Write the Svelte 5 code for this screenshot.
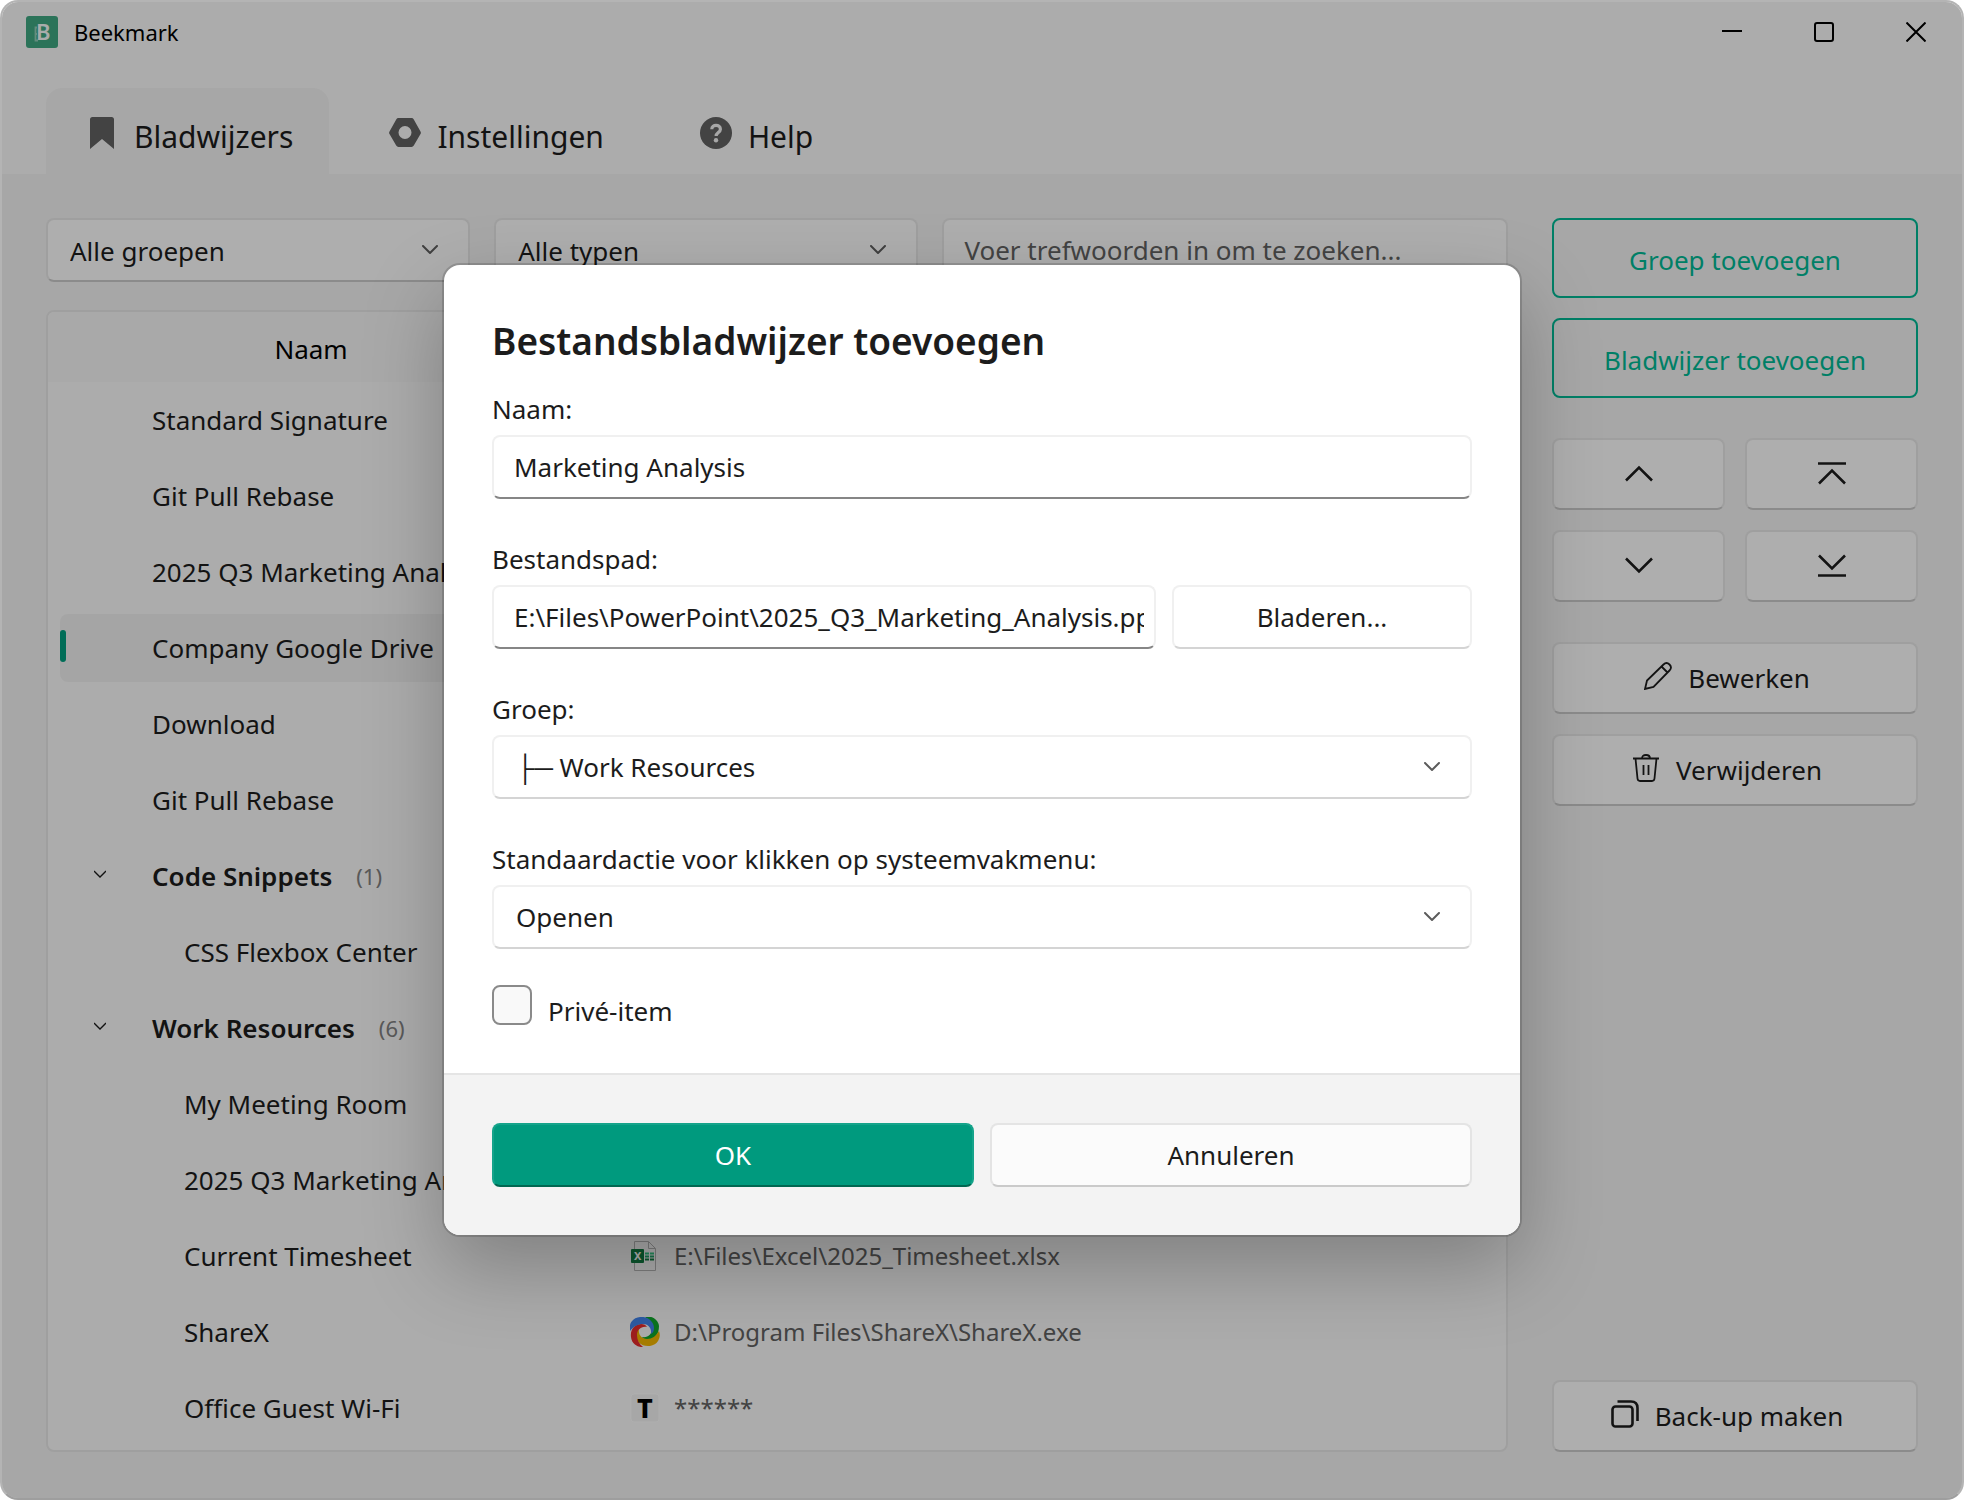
<script>
  const bookmarks = [
    { name: 'Standard Signature', level: 1 },
    { name: 'Git Pull Rebase', level: 1 },
    { name: '2025 Q3 Marketing Analysis', level: 1 },
    { name: 'Company Google Drive', level: 1, selected: true },
    { name: 'Download', level: 1 },
    { name: 'Git Pull Rebase', level: 1 },
    { name: 'Code Snippets', group: true, count: 1 },
    { name: 'CSS Flexbox Center', level: 2 },
    { name: 'Work Resources', group: true, count: 6 },
    { name: 'My Meeting Room', level: 2 },
    { name: '2025 Q3 Marketing Analysis', level: 2 },
    { name: 'Current Timesheet', level: 2, icon: 'excel', value: 'E:\\Files\\Excel\\2025_Timesheet.xlsx' },
    { name: 'ShareX', level: 2, icon: 'sharex', value: 'D:\\Program Files\\ShareX\\ShareX.exe' },
    { name: 'Office Guest Wi-Fi', level: 2, icon: 'text', value: '******' }
  ];

  let name = $state('Marketing Analysis');
  let path = $state('E:\\Files\\PowerPoint\\2025_Q3_Marketing_Analysis.pptx');
  let isPrivate = $state(false);
</script>

{#snippet chevron()}
  <svg class="chevron" width="16" height="10" viewBox="0 0 16 10" aria-hidden="true">
    <path d="M1 1l7 7 7-7" fill="none" stroke="#5c5c5c" stroke-width="2" stroke-linecap="round" stroke-linejoin="round" />
  </svg>
{/snippet}

<div class="window">
  <header>
    <div class="titlebar">
      <svg class="logo" width="32" height="32" viewBox="0 0 32 32" aria-hidden="true">
        <rect width="32" height="32" rx="3" fill="#3ea580" />
        <path d="M11 11.500H9.500v13H12M9.500 18H11" fill="none" stroke="#8fcab5" stroke-width="1.800" />
        <text x="10" y="24" font-size="22" font-weight="600" fill="#f2f7f5">B</text>
      </svg>
      <span class="app-name">Beekmark</span>
      <div class="controls">
        <button aria-label="Minimaliseren">
          <svg width="20" height="20" viewBox="0 0 20 20"><path d="M0 9h20" stroke="#000" stroke-width="2" /></svg>
        </button>
        <button aria-label="Maximaliseren">
          <svg width="20" height="20" viewBox="0 0 20 20"><rect x="1" y="1" width="18" height="18" rx="2" fill="none" stroke="#000" stroke-width="2" /></svg>
        </button>
        <button aria-label="Sluiten">
          <svg width="20" height="20" viewBox="0 0 20 20"><path d="M.5.5l19 19M19.5.5l-19 19" stroke="#000" stroke-width="2" /></svg>
        </button>
      </div>
    </div>

    <nav>
      <button class="tab active">
        <svg width="32" height="32" viewBox="0 0 32 32"><path d="M4 2.500q0-2.500 2.500-2.500h19q2.500 0 2.500 2.500V32L16 22 4 32z" /></svg>
        Bladwijzers
      </button>
      <button class="tab">
        <svg width="32" height="32" viewBox="0 0 32 32"><path fill-rule="evenodd" d="M9.500 1h13q1.500 0 2.300 1.400l6.700 12q.8 1.300 0 2.600l-6.700 11.600q-.8 1.400-2.300 1.400h-13q-1.500 0-2.300-1.400L.5 17q-.8-1.300 0-2.600l6.700-12Q8 1 9.500 1zM16 9a6.500 6.500 0 1 0 0 13 6.500 6.500 0 0 0 0-13z" /></svg>
        Instellingen
      </button>
      <button class="tab">
        <svg width="32" height="32" viewBox="0 0 32 32"><circle cx="16" cy="16" r="16" /><path d="M11.800 12.200c0-5 8.600-5 8.600 0 0 3.200-4.300 3.400-4.300 6.800" fill="none" stroke="#f0f0f0" stroke-width="3.200" /><circle cx="16" cy="23.300" r="2.200" fill="#f0f0f0" /></svg>
        Help
      </button>
    </nav>
  </header>

  <div class="content">
    <main>
      <div class="filters">
        <div class="select">
          <select aria-label="Groepen"><option>Alle groepen</option></select>
          {@render chevron()}
        </div>
        <div class="select">
          <select aria-label="Typen"><option>Alle typen</option></select>
          {@render chevron()}
        </div>
        <input class="search" type="text" aria-label="Zoeken" placeholder="Voer trefwoorden in om te zoeken..." />
      </div>

      <div class="list">
        <table>
          <thead>
            <tr><th class="name-col">Naam</th><th aria-label="Inhoud"></th></tr>
          </thead>
          <tbody>
            {#each bookmarks as item}
              <tr class:selected={item.selected}>
                <td>
                  <div class="cell name-cell" class:nested={item.level === 2} class:group={item.group}>
                    {#if item.group}
                      <svg class="toggle" width="12" height="8" viewBox="0 0 12 8"><path d="M0 1l6 6 6-6" fill="none" stroke="#1c1c1c" stroke-width="1.300" /></svg>
                    {/if}
                    <span>{item.name}</span>
                    {#if item.count}<span class="count">({item.count})</span>{/if}
                  </div>
                </td>
                <td>
                  <div class="cell value-cell">
                    {#if item.icon === 'excel'}
                      <svg width="30" height="30" viewBox="0 0 30 30">
                        <path d="M4.500.5h14l7 7v22h-21z" fill="none" stroke="#b4b4b4" />
                        <path d="M18.500.5v7h7" fill="none" stroke="#b4b4b4" />
                        <rect x="1" y="8" width="13" height="14" rx="1" fill="#107c41" />
                        <text x="4" y="19" font-size="11" font-weight="700" fill="#fff">X</text>
                        <path d="M15 12.500h4M20 12.500h4" stroke="#33c481" stroke-width="2" />
                        <path d="M15 15.500h4M20 15.500h4" stroke="#21a366" stroke-width="2" />
                        <path d="M15 18.500h4M20 18.500h4" stroke="#107c41" stroke-width="2" />
                      </svg>
                    {:else if item.icon === 'sharex'}
                      <svg width="30" height="30" viewBox="0 0 30 30">
                        <path d="M15 0a11 11 0 0 1 14 9c0 9-5 14-11 14-3 0-5-1-6-3 6 1 10-3 10-8 0-5-3-9-7-12z" fill="#10a52c" />
                        <path d="M29 14a11 11 0 0 1-9 15c-9 1-14-5-14-11 0-3 1-5 3-6-1 6 3 10 8 10 5 0 9-3 12-8z" fill="#f0b400" />
                        <path d="M13 30A11 11 0 0 1 1 20C0 12 5 7 11 7c3 0 5 1 6 3-6-1-10 3-10 8 0 5 2 9 6 12z" fill="#e32b2b" />
                        <path d="M0 14A11 11 0 0 1 10 0c8-1 14 5 14 11 0 3-1 5-3 6 1-6-3-10-8-10-5 0-9 2-13 7z" fill="#3f82e8" />
                      </svg>
                    {:else if item.icon === 'text'}
                      <svg width="30" height="30" viewBox="0 0 30 30">
                        <rect x="1" y="1" width="28" height="28" rx="3" fill="#efefef" stroke="#fafafa" />
                        <text x="15" y="25" font-size="27" font-weight="800" text-anchor="middle" fill="#000">T</text>
                      </svg>
                    {/if}
                    <span>{item.value ?? ''}</span>
                  </div>
                </td>
              </tr>
            {/each}
          </tbody>
        </table>
      </div>
    </main>

    <aside>
      <button class="outline">Groep toevoegen</button>
      <button class="outline">Bladwijzer toevoegen</button>
      <div class="arrows">
        <button class="btn" aria-label="Omhoog">
          <svg width="28" height="28" viewBox="0 0 28 28"><path d="M1 20.500l13-13 13 13" /></svg>
        </button>
        <button class="btn" aria-label="Naar boven">
          <svg width="28" height="28" viewBox="0 0 28 28"><path d="M0 3.500h28M1 23.500l13-13 13 13" /></svg>
        </button>
        <button class="btn" aria-label="Omlaag">
          <svg width="28" height="28" viewBox="0 0 28 28"><path d="M1 6.500l13 13 13-13" /></svg>
        </button>
        <button class="btn" aria-label="Naar beneden">
          <svg width="28" height="28" viewBox="0 0 28 28"><path d="M0 23.500h28M1 3.500l13 13 13-13" /></svg>
        </button>
      </div>
      <button class="btn with-icon">
        <svg class="thin" width="28" height="28" viewBox="0 0 28 28"><path d="M1 27l2-8.500L19.500 2.500q3-3 6 0t0 6L9.500 25zM17.500 4.500l6 6" /></svg>
        Bewerken
      </button>
      <button class="btn with-icon">
        <svg class="thin" width="28" height="28" viewBox="0 0 28 28"><path d="M1 4.500h26M10 4.500q0-3.500 4-3.500t4 3.500M3.500 4.500l2 20q.3 2.500 2.500 2.500h12q2.200 0 2.500-2.500l2-20M11.500 11v10M16.500 11v10" /></svg>
        Verwijderen
      </button>
      <button class="btn with-icon backup">
        <svg width="28" height="28" viewBox="0 0 28 28"><rect x="1.500" y="6.500" width="20" height="20" rx="3" /><path d="M6.500 1.500H20q6.500 0 6.500 6.500v13" /></svg>
        Back-up maken
      </button>
    </aside>
  </div>

  <div class="scrim">
    <div class="dialog" role="dialog" aria-labelledby="dialog-title">
      <div class="body">
        <h1 id="dialog-title">Bestandsbladwijzer toevoegen</h1>

        <div class="field">
          <label for="name">Naam:</label>
          <input id="name" type="text" bind:value={name} />
        </div>

        <div class="field">
          <label for="path">Bestandspad:</label>
          <div class="path-row">
            <input id="path" type="text" bind:value={path} />
            <button class="btn">Bladeren...</button>
          </div>
        </div>

        <div class="field">
          <label for="group">Groep:</label>
          <div class="select">
            <select id="group"><option>├─ Work Resources</option></select>
            {@render chevron()}
          </div>
        </div>

        <div class="field">
          <label for="action">Standaardactie voor klikken op systeemvakmenu:</label>
          <div class="select">
            <select id="action"><option>Openen</option></select>
            {@render chevron()}
          </div>
        </div>

        <label class="check">
          <input type="checkbox" bind:checked={isPrivate} />
          <span>Privé-item</span>
        </label>
      </div>

      <footer>
        <button class="btn primary">OK</button>
        <button class="btn cancel">Annuleren</button>
      </footer>
    </div>
  </div>
</div>

<style>
  :global(body) {
    margin: 0;
    background: #fff;
  }

  .window {
    position: relative;
    display: flex;
    flex-direction: column;
    box-sizing: border-box;
    min-height: 100vh;
    border: 2px solid #b4b4b4;
    border-bottom-color: #9e9e9e;
    border-radius: 18px;
    overflow: hidden;
    background: #f0f0f0;
    color: #1c1c1c;
    font-family: 'Noto Sans', 'Open Sans', sans-serif;
    font-size: 26px;
    line-height: 36px;
  }

  .window * {
    box-sizing: border-box;
  }

  button,
  input,
  select {
    font: inherit;
    color: inherit;
    margin: 0;
  }

  header {
    background: #f7f7f7;
  }

  .titlebar {
    display: flex;
    align-items: center;
    height: 60px;
    padding-left: 24px;
  }

  .app-name {
    margin-left: 16px;
    font-size: 22px;
    color: #000;
  }

  .controls {
    display: flex;
    margin-left: auto;
  }

  .controls button {
    display: flex;
    align-items: center;
    justify-content: center;
    width: 92px;
    height: 60px;
    padding: 0;
    border: none;
    background: none;
  }

  nav {
    display: flex;
    gap: 20px;
    padding: 26px 44px 0;
  }

  .tab {
    display: flex;
    align-items: center;
    gap: 16px;
    height: 86px;
    padding: 12px 36px 0 40px;
    border: none;
    border-radius: 16px 16px 0 0;
    background: none;
    font-size: 30px;
  }

  .tab svg {
    fill: #606060;
    margin-bottom: 8px;
  }

  .tab.active {
    background: #f0f0f0;
  }

  .content {
    flex: 1;
    display: flex;
    gap: 44px;
    padding: 44px 44px 46px;
  }

  main {
    flex: 1;
    display: flex;
    flex-direction: column;
    gap: 28px;
    min-width: 0;
  }

  .filters {
    display: grid;
    grid-template-columns: 3fr 3fr 4fr;
    gap: 24px;
  }

  .select {
    display: grid;
    align-items: center;
  }

  select,
  input[type='text'] {
    width: 100%;
    height: 64px;
    padding: 0 10px 0 20px;
    border: 2px solid #e4e4e4;
    border-bottom-color: #c8c8c8;
    border-radius: 8px;
    background: #fafafa;
    outline: none;
  }

  select {
    grid-area: 1 / 1;
    appearance: none;
    padding: 0 22px;
  }

  .filters select {
    padding-top: 2px;
  }

  .chevron {
    grid-area: 1 / 1;
    justify-self: end;
    margin-right: 32px;
    pointer-events: none;
  }

  .search::placeholder {
    color: #606060;
    opacity: 1;
  }

  .list {
    flex: 1;
    border: 2px solid #e4e4e4;
    border-radius: 8px;
    background: #f7f7f7;
    overflow: hidden;
  }

  table {
    width: 100%;
    border-collapse: collapse;
    table-layout: fixed;
  }

  th {
    height: 70px;
    padding: 4px 0 0;
    background: #f2f2f2;
    color: #000;
    font-weight: 400;
  }

  .name-col {
    width: 526px;
  }

  td {
    padding: 4px 0;
  }

  .cell {
    display: flex;
    align-items: center;
    height: 68px;
    white-space: nowrap;
  }

  .name-cell {
    margin-left: 12px;
    padding-left: 92px;
    border-radius: 8px 0 0 8px;
  }

  .nested {
    padding-left: 124px;
  }

  .group {
    padding-left: 34px;
    font-weight: 600;
  }

  .toggle {
    margin-right: 46px;
    margin-bottom: 4px;
  }

  .count {
    margin-left: 24px;
    color: #808080;
    font-size: 22px;
    font-weight: 400;
  }

  .value-cell {
    gap: 14px;
    margin-right: 12px;
    padding-left: 56px;
    border-radius: 0 8px 8px 0;
    color: #606060;
    font-size: 24px;
  }

  .selected .cell {
    background: #ededed;
  }

  .selected .name-cell {
    padding-left: 0;
  }

  .selected .name-cell::before {
    content: '';
    width: 6px;
    height: 32px;
    margin-right: 86px;
    margin-bottom: 4px;
    border-radius: 3px;
    background: #009c7d;
  }

  aside {
    display: flex;
    flex-direction: column;
    gap: 20px;
    width: 366px;
  }

  .outline {
    height: 80px;
    padding: 4px 0 0;
    border: 2px solid #00b793;
    border-radius: 8px;
    background: none;
    color: #00b793;
  }

  .btn {
    display: flex;
    align-items: center;
    justify-content: center;
    gap: 16px;
    height: 72px;
    padding: 0;
    border: 2px solid #e4e4e4;
    border-bottom-color: #c8c8c8;
    border-radius: 8px;
    background: #fafafa;
  }

  .btn svg {
    fill: none;
    stroke: #1c1c1c;
    stroke-width: 2.600;
  }

  .btn svg.thin {
    stroke-width: 1.800;
  }

  .with-icon {
    padding-right: 16px;
  }

  .with-icon svg {
    margin-bottom: 4px;
  }

  .arrows {
    display: grid;
    grid-template-columns: 1fr 1fr;
    gap: 20px;
    margin: 20px 0;
  }

  .backup {
    margin-top: auto;
  }

  .scrim {
    position: absolute;
    inset: 0;
    display: flex;
    align-items: center;
    justify-content: center;
    background: rgba(0, 0, 0, 0.3);
  }

  .dialog {
    width: 1076px;
    border-radius: 16px;
    overflow: hidden;
    background: #fff;
    box-shadow: 0 0 0 2px rgba(0, 0, 0, 0.15), 0 32px 80px rgba(0, 0, 0, 0.26);
  }

  .body {
    padding: 48px 48px 44px;
  }

  h1 {
    margin: 0 0 22px;
    font-size: 37px;
    line-height: 56px;
    font-weight: 600;
  }

  .field {
    display: flex;
    flex-direction: column;
    gap: 8px;
    margin-bottom: 42px;
  }

  .dialog input[type='text'],
  .dialog select,
  .dialog .btn {
    height: 64px;
    border-color: #f0f0f0;
    border-bottom-color: #d4d4d4;
    background: #fff;
  }

  .dialog input[type='text'] {
    border-bottom-color: #868686;
  }

  .path-row {
    display: grid;
    grid-template-columns: 1fr 300px;
    gap: 16px;
  }

  .check {
    display: flex;
    align-items: center;
    gap: 16px;
    margin-top: -10px;
  }

  .check input {
    appearance: none;
    width: 40px;
    height: 40px;
    border: 2px solid #8a8a8a;
    border-radius: 8px;
    background: #f9f9f9;
  }

  .check span {
    padding-top: 12px;
  }

  footer {
    display: grid;
    grid-template-columns: 1fr 1fr;
    gap: 16px;
    padding: 48px;
    border-top: 2px solid #e5e5e5;
    background: #f3f3f3;
  }

  .dialog .cancel {
    border-color: #e4e4e4;
    border-bottom-color: #cacaca;
    background: #fbfbfb;
  }

  .dialog .primary {
    border-color: #14a38a;
    border-bottom-color: #006751;
    background: #009a7e;
    color: #fff;
  }
</style>
